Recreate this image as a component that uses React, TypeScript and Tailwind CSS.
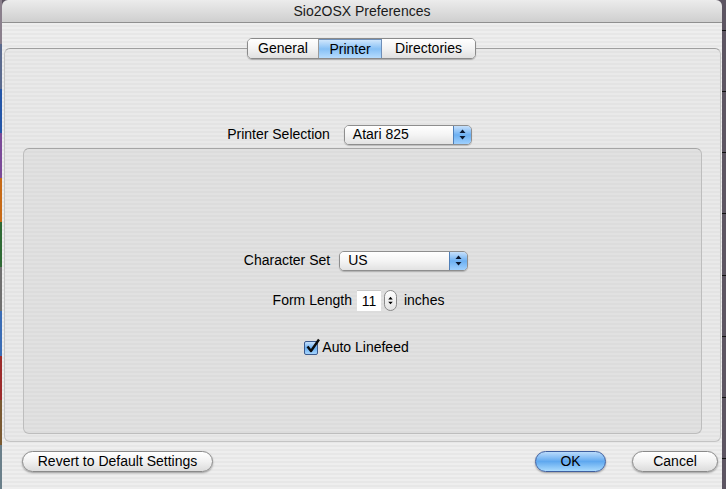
import React from "react";

const stripe =
  "bg-[repeating-linear-gradient(to_bottom,#eeeeee_0px,#eeeeee_2px,#e7e7e7_2px,#e7e7e7_4px)]";

function Arrows({ className = "" }: { className?: string }) {
  return (
    <svg width="7" height="11" viewBox="0 0 7 11" className={className}>
      <path d="M3.5 0.5 L6.5 4 L0.5 4 Z" fill="currentColor" />
      <path d="M3.5 10.5 L6.5 7 L0.5 7 Z" fill="currentColor" />
    </svg>
  );
}

function PopUp({ label, width }: { label: string; width: string }) {
  return (
    <div
      className={`${width} h-[20px] flex rounded-[5px] border border-[#8e8e8e] shadow-[0_1px_1px_rgba(0,0,0,0.2)] overflow-hidden`}
    >
      <div className="flex-1 flex items-center pl-[8px] bg-gradient-to-b from-[#ffffff] via-[#f4f4f4] to-[#e2e2e2] text-[14px] text-black">
        {label}
      </div>
      <div className="w-[18px] flex items-center justify-center border-l border-[#4f7fb8] bg-gradient-to-b from-[#c6e0fb] via-[#6cb0f2] to-[#9fd0fd] text-[#0b1830]">
        <Arrows />
      </div>
    </div>
  );
}

function PillButton({
  children,
  width,
  blue = false,
}: {
  children: React.ReactNode;
  width: string;
  blue?: boolean;
}) {
  return (
    <button
      className={`${width} h-[21px] rounded-full flex items-center justify-center text-[14px] text-black shadow-[0_1px_2px_rgba(0,0,0,0.35)] ${
        blue
          ? "border border-[#3f5f9f] bg-gradient-to-b from-[#b9dbfb] via-[#5fa8ef] to-[#a8dafd]"
          : "border border-[#8a8a8a] bg-gradient-to-b from-[#ffffff] via-[#f1f1f1] to-[#dcdcdc]"
      }`}
    >
      {children}
    </button>
  );
}

export default function App() {
  const desktopColors = [
    "bg-[#8a7f8c]",
    "bg-[#5b6b8f]",
    "bg-[#2456a8]",
    "bg-[#7b4a98]",
    "bg-[#c76a17]",
    "bg-[#2f6a35]",
    "bg-[#6f6f6f]",
    "bg-[#3a6cb5]",
    "bg-[#9c2b2b]",
    "bg-[#7a5a32]",
    "bg-[#6a7f8a]",
  ];

  return (
    <div
      className="w-[726px] h-[489px] flex bg-[#5d5562] overflow-hidden"
      style={{ fontFamily: '"Liberation Sans", Arial, sans-serif' }}
    >
      {/* desktop peeking on the left */}
      <div className="w-[2px] flex flex-col">
        {desktopColors.map((c, i) => (
          <div key={i} className={`flex-1 ${c}`} />
        ))}
      </div>

      {/* window */}
      <div className="w-[720px] flex flex-col rounded-t-[6px] overflow-hidden">
        <div className="h-[23px] shrink-0 flex items-center justify-center bg-gradient-to-b from-[#ececec] to-[#cfcfcf] border-b border-[#8f8f8f] text-[14px] text-[#1a1a1a]">
          Sio2OSX Preferences
        </div>

        <div className={`flex-1 flex flex-col pt-[15px] ${stripe}`}>
          {/* tab control */}
          <div className="relative z-10 flex justify-center">
            <div className="ml-[-1px] flex h-[21px] rounded-[5px] border border-[#8a8a8a] shadow-[0_1px_1px_rgba(0,0,0,0.25)] overflow-hidden text-[14px] text-black">
              <div className="w-[71px] flex items-center justify-center bg-gradient-to-b from-[#ffffff] via-[#f3f3f3] to-[#e0e0e0] border-r border-[#9a9a9a]">
                General
              </div>
              <div className="w-[63px] flex items-center justify-center bg-gradient-to-b from-[#cfe6fc] via-[#86c0f5] to-[#b6dcfd] border-t border-[#1f3f8f] border-r border-[#6f8fb8]">
                Printer
              </div>
              <div className="w-[93px] flex items-center justify-center bg-gradient-to-b from-[#ffffff] via-[#f3f3f3] to-[#e0e0e0]">
                Directories
              </div>
            </div>
          </div>

          {/* tab box */}
          <div className="mt-[-11px] ml-[2px] mr-[1px] h-[394px] rounded-[6px] border border-[#c4c4c4] border-t-[#9f9f9f] bg-[repeating-linear-gradient(to_bottom,#e9e9e9_0px,#e9e9e9_2px,#e3e3e3_2px,#e3e3e3_4px)] flex flex-col pt-[75px]">
            <div className="flex items-center justify-center gap-[14px] pr-[26px]">
              <span className="text-[14px] text-black">Printer Selection</span>
              <PopUp label="Atari 825" width="w-[128px]" />
            </div>

            <div className="mt-[3px] mx-[18px] h-[286px] rounded-[6px] border border-[#bdbdbd] border-t-[#a6a6a6] bg-[repeating-linear-gradient(to_bottom,#e1e1e1_0px,#e1e1e1_2px,#dcdcdc_2px,#dcdcdc_4px)] flex flex-col items-center pt-[101px]">
              <div className="flex items-center gap-[9px] mr-[13px]">
                <span className="text-[14px] text-black">Character Set</span>
                <PopUp label="US" width="w-[129px]" />
              </div>

              <div className="mt-[19px] flex items-center mr-[8px]">
                <span className="text-[14px] text-black">Form Length</span>
                <div className="ml-[5px] w-[24px] h-[21px] bg-white border-t border-[#c8c8c8] flex items-center justify-center text-[14px] text-black">
                  11
                </div>
                <div className="ml-[3px] w-[13px] h-[21px] rounded-full border border-[#8a8a8a] bg-gradient-to-b from-[#ffffff] to-[#e2e2e2] flex items-center justify-center text-black">
                  <Arrows className="scale-75" />
                </div>
                <span className="ml-[7px] text-[14px] text-black">inches</span>
              </div>

              <div className="mt-[26px] flex items-center gap-[4px] mr-[12px]">
                <div className="relative w-[14px] h-[14px] rounded-[2px] border border-[#3b5a8e] bg-gradient-to-b from-[#c6e0fb] via-[#6cb0f2] to-[#a4d4fd]">
                  <svg
                    width="16"
                    height="16"
                    viewBox="0 0 16 16"
                    className="absolute left-[0px] top-[-4px]"
                  >
                    <path
                      d="M2.5 8.5 L6 13 L14 1.5"
                      fill="none"
                      stroke="#0c0c0c"
                      strokeWidth="2.4"
                      strokeLinejoin="round"
                    />
                  </svg>
                </div>
                <span className="text-[14px] text-black">Auto Linefeed</span>
              </div>
            </div>
          </div>

          {/* bottom buttons */}
          <div className="mt-[9px] flex items-center pl-[20px] pr-[4px]">
            <PillButton width="w-[191px]">Revert to Default Settings</PillButton>
            <div className="flex-1" />
            <PillButton width="w-[71px]" blue>
              OK
            </PillButton>
            <div className="w-[26px]" />
            <PillButton width="w-[86px]">Cancel</PillButton>
          </div>
        </div>
      </div>

      {/* desktop on the right */}
      <div className="flex-1 bg-[#5d5562] flex flex-col justify-around">
        {Array.from({ length: 8 }).map((_, i) => (
          <div key={i} className="h-[1px] bg-[#111]" />
        ))}
      </div>
    </div>
  );
}
